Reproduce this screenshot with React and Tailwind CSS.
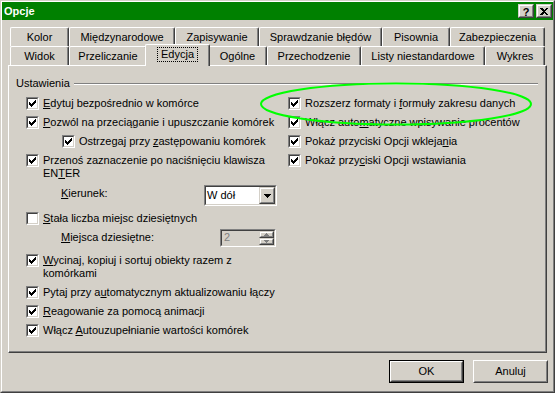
import React from 'react'

const rowOne = [
  { label: 'Kolor', cls: 'w-[59px]' },
  { label: 'Międzynarodowe', cls: 'w-[106px]' },
  { label: 'Zapisywanie', cls: 'w-[84px]' },
  { label: 'Sprawdzanie błędów', cls: 'w-[123px]' },
  { label: 'Pisownia', cls: 'w-[68px]' },
  { label: 'Zabezpieczenia', cls: 'w-[95px]' },
]

const rowTwo = [
  { label: 'Widok', cls: 'w-[59px]' },
  { label: 'Przeliczanie', cls: 'w-[78px]' },
  { label: 'Edycja', cls: 'w-[61px]', active: true },
  { label: 'Ogólne', cls: 'w-[59px]' },
  { label: 'Przechodzenie', cls: 'w-[94px]' },
  { label: 'Listy niestandardowe', cls: 'w-[124px]' },
  { label: 'Wykres', cls: 'w-[60px]' },
]

const Tick = () => (
  <svg width="7" height="7" viewBox="0 0 7 7" shapeRendering="crispEdges">
    <rect x="6" y="0" width="1" height="1" fill="#000" />
    <rect x="5" y="1" width="2" height="1" fill="#000" />
    <rect x="0" y="2" width="1" height="1" fill="#000" />
    <rect x="4" y="2" width="3" height="1" fill="#000" />
    <rect x="0" y="3" width="2" height="1" fill="#000" />
    <rect x="3" y="3" width="3" height="1" fill="#000" />
    <rect x="0" y="4" width="5" height="1" fill="#000" />
    <rect x="1" y="5" width="3" height="1" fill="#000" />
    <rect x="2" y="6" width="1" height="1" fill="#000" />
  </svg>
)

const Check = ({ checked = true }) => (
  <span className="w-[13px] h-[13px] shrink-0 flex border border-t-[#808080] border-l-[#808080] border-b-white border-r-white">
    <span className="flex-1 flex items-center justify-center bg-white border border-t-[#404040] border-l-[#404040] border-b-[#d4d0c8] border-r-[#d4d0c8]">
      {checked && <Tick />}
    </span>
  </span>
)

const Tab = ({ tab }) => {
  if (tab.active) {
    return (
      <div className="relative z-10 -mx-[2px] mb-[-1px] w-[65px] h-[22px] bg-[#d4d0c8] border-t border-l border-white border-r border-r-[#404040] shadow-[inset_-1px_0_0_#808080] rounded-t-[2px] flex justify-center pt-[2px]">
        <span className="h-[15px] px-[3px] leading-[13px] border border-dotted border-black">{tab.label}</span>
      </div>
    )
  }
  return (
    <div className={`${tab.cls} h-[19px] shrink-0 border-t border-l border-white border-r border-r-[#404040] shadow-[inset_-1px_0_0_#808080] rounded-t-[2px] flex items-center justify-center pt-[1px]`}>
      {tab.label}
    </div>
  )
}

const Row = ({ children, cls = 'h-[19px] items-center', checked = true }) => (
  <div className={`flex ${cls}`}>
    <Check checked={checked} />
    <div className="ml-[4px] leading-[13px]">{children}</div>
  </div>
)

const Raised = ({ children, cls }) => (
  <div className={`${cls} flex border border-t-[#d4d0c8] border-l-[#d4d0c8] border-b-[#404040] border-r-[#404040]`}>
    <div className="flex-1 flex items-center justify-center bg-[#d4d0c8] border border-t-white border-l-white border-b-[#808080] border-r-[#808080]">
      {children}
    </div>
  </div>
)

const Arrow = ({ up, color = '#000', w = 7 }) => (
  <svg width={w} height={Math.ceil(w / 2)} viewBox={`0 0 ${w} ${Math.ceil(w / 2)}`} shapeRendering="crispEdges">
    <polygon
      points={up ? `${w / 2},0 ${w},${Math.ceil(w / 2)} 0,${Math.ceil(w / 2)}` : `0,0 ${w},0 ${w / 2},${Math.ceil(w / 2)}`}
      fill={color}
    />
  </svg>
)

const Sunken = ({ children, cls }) => (
  <div className={`${cls} flex border border-t-[#808080] border-l-[#808080] border-b-white border-r-white`}>
    <div className="flex-1 flex border border-t-[#404040] border-l-[#404040] border-b-[#d4d0c8] border-r-[#d4d0c8]">
      {children}
    </div>
  </div>
)

export default function App() {
  return (
    <div className="relative w-[555px] h-[393px] overflow-hidden bg-[#d4d0c8] text-[11px] text-black font-['Liberation_Sans',Arial,sans-serif] flex border border-t-[#d4d0c8] border-l-[#d4d0c8] border-b-[#404040] border-r-[#404040]">
      <div className="flex-1 flex flex-col border border-t-white border-l-white border-b-[#808080] border-r-[#808080]">
        {/* title bar */}
        <div className="h-[18px] bg-[#008000] flex items-center pl-[2px] pr-[1px]">
          <span className="text-white font-bold leading-[13px]">Opcje</span>
          <div className="ml-auto flex">
            <Raised cls="w-[16px] h-[14px]">
              <span className="font-bold text-[11px] leading-[10px] mt-[1px]">?</span>
            </Raised>
            <Raised cls="w-[16px] h-[14px] ml-[2px]">
              <svg width="8" height="7" viewBox="0 0 8 7" shapeRendering="crispEdges">
                <path d="M0 0h2l2 2 2-2h2L5 3.5 8 7H6L4 5 2 7H0l3-3.5z" fill="#000" />
              </svg>
            </Raised>
          </div>
        </div>

        {/* tabs */}
        <div className="mt-[7px] ml-[8px] flex h-[19px]">
          {rowOne.map((t) => <Tab key={t.label} tab={t} />)}
        </div>
        <div className="ml-[8px] flex items-end h-[19px]">
          {rowTwo.map((t) => <Tab key={t.label} tab={t} />)}
        </div>

        {/* panel */}
        <div className="ml-[6px] w-[539px] h-[288px] flex border border-t-white border-l-white border-b-[#404040] border-r-[#404040]">
          <div className="flex-1 flex flex-col shadow-[inset_-1px_-1px_0_#808080]">
            <div className="mt-[11px] h-[13px] flex items-center pl-[7px] pr-[8px]">
              <span className="leading-[13px]">Ustawienia</span>
              <div className="flex-1 ml-[4px] border-t border-t-[#808080] border-b border-b-white" />
            </div>

            <div className="mt-[4px] flex">
              {/* left column */}
              <div className="w-[279px] pl-[17px] flex flex-col">
                <Row><u>E</u>dytuj bezpośrednio w komórce</Row>
                <Row><u>P</u>ozwól na przeciąganie i upuszczanie komórek</Row>
                <div className="pl-[36px]">
                  <Row>Ostrzegaj przy <u>z</u>astępowaniu komórek</Row>
                </div>
                <Row cls="h-[34px] items-start pt-[3px]">
                  Przenoś zaznaczenie po naciśnięciu klawisza<br />EN<u>T</u>ER
                </Row>
                <div className="h-[21px] flex">
                  <div className="w-[178px] pl-[35px] pt-[2px] leading-[13px]"><u>K</u>ierunek:</div>
                  <Sunken cls="w-[73px] h-[21px]">
                    <div className="flex-1 bg-white flex items-center pl-[1px] leading-[13px]">W dół</div>
                    <Raised cls="w-[16px]">
                      <Arrow />
                    </Raised>
                  </Sunken>
                </div>
                <div className="mt-[3px]">
                  <Row checked={false}><u>S</u>tała liczba miejsc dziesiętnych</Row>
                </div>
                <div className="h-[19px] flex items-center">
                  <div className="w-[194px] pl-[35px] leading-[13px]"><u>M</u>iejsca dziesiętne:</div>
                  <Sunken cls="w-[56px] h-[18px]">
                    <div className="flex-1 flex items-center pl-[2px] text-[#808080] leading-[13px]">2</div>
                    <div className="w-[15px] flex flex-col">
                      <Raised cls="flex-1">
                        <Arrow up color="#808080" w={5} />
                      </Raised>
                      <Raised cls="flex-1">
                        <Arrow color="#808080" w={5} />
                      </Raised>
                    </div>
                  </Sunken>
                </div>
                <div className="mt-[4px]">
                  <Row cls="h-[32px] items-start pt-[3px]">
                    <u>W</u>ycinaj, kopiuj i sortuj obiekty razem z<br />komórkami
                  </Row>
                </div>
                <Row>Pytaj przy a<u>u</u>tomatycznym aktualizowaniu łączy</Row>
                <Row><u>R</u>eagowanie za pomocą animacji</Row>
                <Row>Włącz <u>A</u>utouzupełnianie wartości komórek</Row>
              </div>

              {/* right column */}
              <div className="flex flex-col">
                <Row>Rozszerz formaty i <u>f</u>ormuły zakresu danych</Row>
                <Row>Włącz auto<u>m</u>atyczne wpisywanie procentów</Row>
                <Row>Pokaż przyciski Opcji wkleja<u>n</u>ia</Row>
                <Row>Pokaż przy<u>c</u>iski Opcji wstawiania</Row>
              </div>
            </div>
          </div>
        </div>

        {/* buttons */}
        <div className="mt-[7px] flex justify-end pr-[5px] gap-[9px]">
          <div className="w-[75px] h-[23px] flex border border-black">
            <div className="flex-1 flex border border-t-white border-l-white border-b-[#404040] border-r-[#404040]">
              <div className="flex-1 flex items-center justify-center border border-t-[#d4d0c8] border-l-[#d4d0c8] border-b-[#808080] border-r-[#808080]">
                OK
              </div>
            </div>
          </div>
          <div className="w-[75px] h-[23px] flex border border-t-white border-l-white border-b-[#404040] border-r-[#404040]">
            <div className="flex-1 flex items-center justify-center border border-t-[#d4d0c8] border-l-[#d4d0c8] border-b-[#808080] border-r-[#808080]">
              Anuluj
            </div>
          </div>
        </div>
      </div>

      {/* hand-drawn highlight */}
      <svg className="absolute left-[258px] top-[80px]" width="274" height="46" viewBox="0 0 274 46">
        <ellipse cx="137" cy="23" rx="135" ry="20.5" fill="none" stroke="#00ff00" strokeWidth="2" />
      </svg>
    </div>
  )
}
